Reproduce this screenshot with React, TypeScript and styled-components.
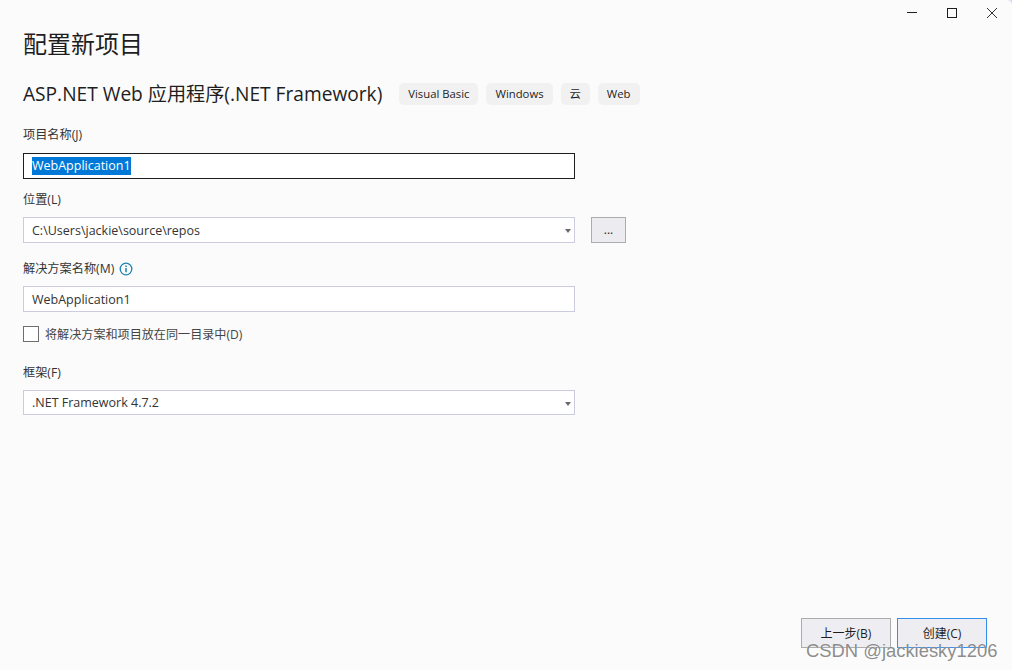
import styled, { createGlobalStyle } from 'styled-components';

const GlobalStyle = createGlobalStyle`
  html, body {
    margin: 0;
    padding: 0;
    background: #cfe0f2;
  }
  * {
    box-sizing: border-box;
  }
`;

const fontStack = `"Open Sans", "Noto Sans CJK SC", sans-serif`;

const Window = styled.div`
  position: relative;
  width: 1012px;
  height: 670px;
  overflow: hidden;
  display: flex;
  flex-direction: column;
  background: #fbfbfc;
  border-top-right-radius: 5px;
  font-family: ${fontStack};
  font-size: 12px;
  color: #1e1e1e;
`;

const TitleBar = styled.div`
  height: 26px;
  display: flex;
  justify-content: flex-end;
  align-items: center;
`;

const WinButton = styled.div`
  width: 40px;
  height: 26px;
  display: flex;
  align-items: center;
  justify-content: center;
`;

const Content = styled.div`
  flex: 1;
  display: flex;
  flex-direction: column;
  padding: 0 25px 22px 23px;
`;

const Title = styled.h1`
  margin: 0;
  height: 36px;
  line-height: 35px;
  font-size: 24px;
  font-weight: 400;
`;

const SubRow = styled.div`
  display: flex;
  align-items: center;
  margin-top: 19px;
  height: 26px;
`;

const SubTitle = styled.h2`
  margin: -2px 17px 0 0;
  font-size: 19.15px;
  font-weight: 400;
  white-space: nowrap;
`;

const Tags = styled.div`
  display: flex;
  gap: 8px;
`;

const Tag = styled.span`
  height: 22px;
  line-height: 22px;
  padding: 0 9px;
  border-radius: 5px;
  background: #f1f1f2;
  font-size: 11.3px;
`;

const Label = styled.div<{ $top: number; $bottom?: number }>`
  display: flex;
  align-items: center;
  gap: 5px;
  height: 16px;
  line-height: 16px;
  margin-top: ${(p) => p.$top}px;
  margin-bottom: ${(p) => p.$bottom ?? 9}px;
  font-size: 12.2px;
  color: #333;
`;

const FieldRow = styled.div`
  display: flex;
  align-items: center;
  gap: 16px;
`;

const Field = styled.div<{ $focused?: boolean; $height?: number }>`
  position: relative;
  width: 552px;
  height: ${(p) => p.$height ?? 26}px;
  display: flex;
  align-items: center;
  padding-left: 8px;
  background: #fff;
  border: 1px solid ${(p) => (p.$focused ? '#1e1e1e' : '#ccccdf')};
  font-size: 12.5px;
  color: #333;
`;

const Selected = styled.span`
  background: #0078d7;
  color: #fff;
  line-height: 18px;
`;

const Caret = styled.span`
  position: absolute;
  right: 3px;
  top: 11px;
  width: 0;
  height: 0;
  border-left: 3.5px solid transparent;
  border-right: 3.5px solid transparent;
  border-top: 4px solid #6a6a6a;
`;

const BrowseButton = styled.button`
  width: 35px;
  height: 26px;
  padding: 0 0 2px;
  border: 1px solid #acacac;
  background: #ecebf0;
  color: #1e1e1e;
  font-family: ${fontStack};
  font-size: 12px;
`;

const CheckRow = styled.div`
  display: flex;
  align-items: center;
  gap: 6px;
  margin-top: 14px;
  height: 16px;
  font-size: 12.1px;
  color: #444;
`;

const CheckBox = styled.span`
  width: 16px;
  height: 16px;
  background: #fff;
  border: 1px solid #6e6e6e;
`;

const Footer = styled.div`
  margin-top: auto;
  display: flex;
  justify-content: flex-end;
  gap: 6px;
`;

const ActionButton = styled.button<{ $primary?: boolean }>`
  width: 90px;
  height: 30px;
  border: 1px solid ${(p) => (p.$primary ? '#3390ee' : '#acacac')};
  background: #eeedf2;
  color: #1e1e1e;
  font-family: ${fontStack};
  font-size: 12px;
`;

const Watermark = styled.div`
  position: absolute;
  left: 806px;
  top: 640px;
  font-family: "Liberation Sans", sans-serif;
  font-size: 18.4px;
  line-height: 22px;
  white-space: nowrap;
  color: rgba(110, 110, 110, 0.8);
  text-shadow: 0 0 1px rgba(255, 255, 255, 0.8);
`;

const MinimizeIcon = () => (
  <svg width="12" height="12" viewBox="0 0 12 12">
    <path d="M1 5.5h10" stroke="#1e1e1e" strokeWidth="1" />
  </svg>
);

const MaximizeIcon = () => (
  <svg width="12" height="12" viewBox="0 0 12 12">
    <rect x="1.5" y="1.5" width="9" height="9" fill="none" stroke="#1e1e1e" strokeWidth="1" />
  </svg>
);

const CloseIcon = () => (
  <svg width="12" height="12" viewBox="0 0 12 12">
    <path d="M1 1l10 10M11 1L1 11" stroke="#333" strokeWidth="1" />
  </svg>
);

const InfoIcon = () => (
  <svg width="14" height="14" viewBox="0 0 14 14">
    <circle cx="7" cy="7" r="5.8" fill="none" stroke="#1c84b0" strokeWidth="1.3" />
    <path d="M7 6v4.2" stroke="#1c84b0" strokeWidth="1.5" />
    <path d="M7 3.4v1.5" stroke="#1c84b0" strokeWidth="1.5" />
  </svg>
);

export default function App() {
  return (
    <>
      <GlobalStyle />
      <Window>
        <TitleBar>
          <WinButton>
            <MinimizeIcon />
          </WinButton>
          <WinButton>
            <MaximizeIcon />
          </WinButton>
          <WinButton>
            <CloseIcon />
          </WinButton>
        </TitleBar>
        <Content>
          <Title>配置新项目</Title>
          <SubRow>
            <SubTitle>ASP.NET Web 应用程序(.NET Framework)</SubTitle>
            <Tags>
              <Tag>Visual Basic</Tag>
              <Tag>Windows</Tag>
              <Tag>云</Tag>
              <Tag>Web</Tag>
            </Tags>
          </SubRow>

          <Label $top={20} $bottom={10}>项目名称(J)</Label>
          <Field $focused>
            <Selected>WebApplication1</Selected>
          </Field>

          <Label $top={13}>位置(L)</Label>
          <FieldRow>
            <Field>
              C:\Users\jackie\source\repos
              <Caret />
            </Field>
            <BrowseButton>...</BrowseButton>
          </FieldRow>

          <Label $top={18}>
            解决方案名称(M)
            <InfoIcon />
          </Label>
          <Field>WebApplication1</Field>

          <CheckRow>
            <CheckBox />
            将解决方案和项目放在同一目录中(D)
          </CheckRow>

          <Label $top={23}>框架(F)</Label>
          <Field $height={25}>
            .NET Framework 4.7.2
            <Caret />
          </Field>

          <Footer>
            <ActionButton>上一步(B)</ActionButton>
            <ActionButton $primary>创建(C)</ActionButton>
          </Footer>
        </Content>
        <Watermark>CSDN @jackiesky1206</Watermark>
      </Window>
    </>
  );
}
